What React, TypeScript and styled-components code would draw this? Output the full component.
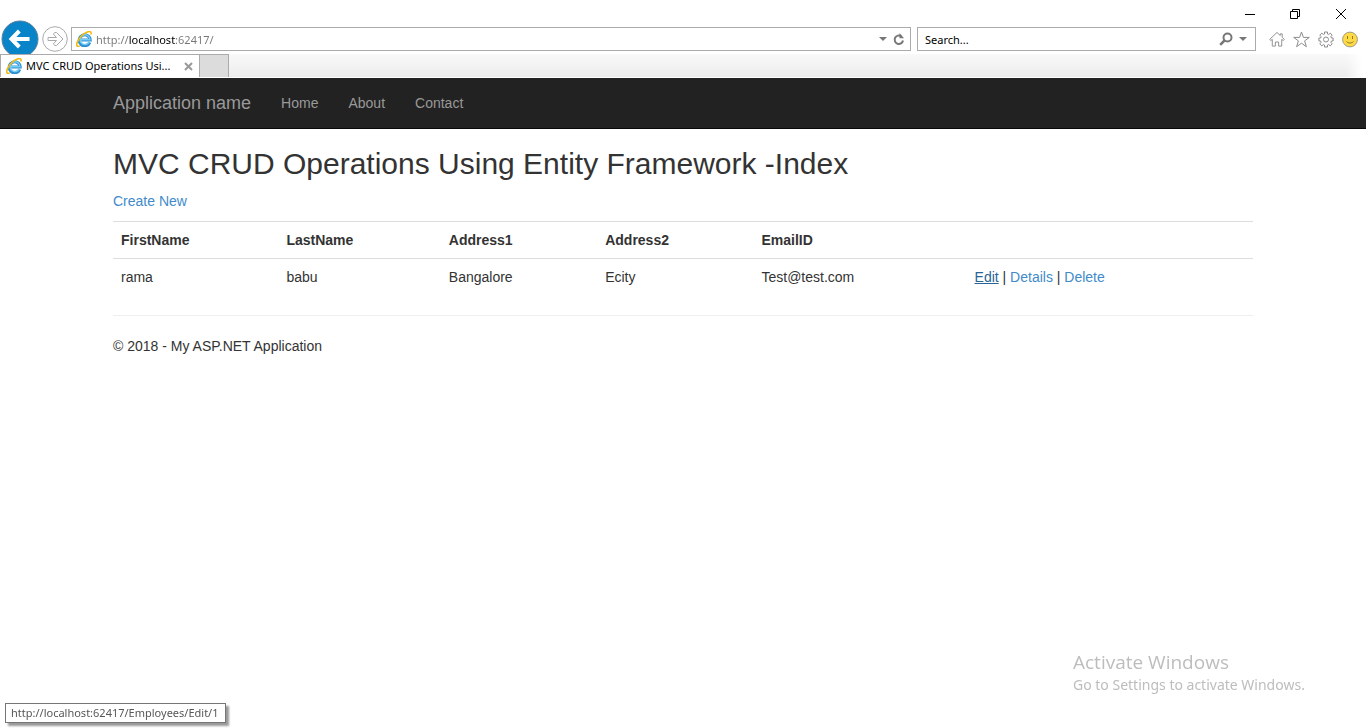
import React from "react";
import styled, { createGlobalStyle } from "styled-components";

const GlobalStyle = createGlobalStyle`
  *, *::before, *::after { box-sizing: border-box; }
  body {
    margin: 0;
    background: #fff;
    color: #333;
    font: 14px/20px "Liberation Sans", Arial, sans-serif;
  }
  button, input { font: inherit; margin: 0; padding: 0; border: 0; background: none; color: inherit; }
  svg { display: block; }
`;

const uiFont = `"Noto Sans", "Open Sans", sans-serif`;

/* ---------- browser frame ---------- */

const Chrome = styled.header`
  background: #fff;
  color: #000;
  font-family: ${uiFont};
  font-size: 11px;
  line-height: 16px;
`;

const TitleBar = styled.div`
  display: flex;
  justify-content: flex-end;
  gap: 34px;
  height: 20px;
  padding: 8px 19px 0 0;
`;

const IconButton = styled.button`
  display: flex;
  flex: none;
  color: #777;
`;

const WindowButton = styled(IconButton)`
  color: #000;
  height: 12px;
`;

const AddressRow = styled.div`
  display: flex;
  align-items: center;
  height: 34px;
  padding: 4px 8px 0 1px;
`;

const BackButton = styled(IconButton)`
  align-self: flex-end;
`;

const ForwardButton = styled(IconButton)`
  margin: 0 3px;
`;

const Field = styled.div`
  display: flex;
  align-items: center;
  height: 24px;
  min-width: 0;
  border: 1px solid #ababab;
  background: #fff;
`;

const AddressField = styled(Field)`
  flex: 1;
  gap: 4px;
  padding: 0 5px 0 4px;
`;

const SearchField = styled(Field)`
  flex: 0 1 339px;
  gap: 4px;
  margin: 0 13px 0 6px;
  padding: 0 8px 0 7px;
`;

const TextInput = styled.input`
  flex: 1;
  min-width: 0;
  height: 20px;
  outline: 0;
  &::placeholder { color: #000; opacity: 1; }
`;

/* The host part of the address is darker than the rest. */
const AddressInput = styled(TextInput)`
  background: linear-gradient(90deg, #777 33px, #000 33px, #000 79px, #777 79px);
  background-clip: text;
  -webkit-background-clip: text;
  -webkit-text-fill-color: transparent;
`;

const FieldTools = styled.div`
  display: flex;
  align-items: center;
  gap: 6px;
`;

const ToolButtons = styled.div`
  display: flex;
  gap: 8px;
`;

const TabBar = styled.div`
  display: flex;
  height: 24px;
  border-bottom: 1px solid #fff;
  background: linear-gradient(90deg, transparent calc(100% - 20px), #fff calc(100% - 4px)),
    linear-gradient(#f9f9f9, #ececec);
`;

const Tab = styled.div`
  display: flex;
  align-items: center;
  gap: 4px;
  width: 200px;
  padding: 0 6px 0 5px;
  border: 1px solid #ababab;
  border-bottom: 0;
  background: #fff;
`;

const TabTitle = styled.span`
  flex: 1;
  white-space: nowrap;
`;

const NewTab = styled.button`
  width: 29px;
  border: 1px solid #ababab;
  border-width: 1px 1px 0 0;
  background: #dcdcdc;
`;

/* ---------- page ---------- */

const NavBar = styled.nav`
  min-height: 51px;
  border-bottom: 1px solid #080808;
  background: #222;
`;

const Container = styled.div`
  max-width: 1170px;
  margin: 0 auto;
  padding: 0 15px;
`;

const NavItems = styled(Container)`
  display: flex;
`;

const NavLink = styled.a`
  padding: 15px;
  color: #999;
  text-decoration: none;
`;

const Brand = styled(NavLink)`
  padding-left: 0;
  font-size: 18px;
`;

const Content = styled(Container).attrs({ as: "main" })`
  padding-top: 18px;
`;

const Heading = styled.h2`
  margin: 0 0 11px;
  font-size: 30px;
  font-weight: 500;
  line-height: 33px;
`;

const Paragraph = styled.p`
  margin: 0 0 10px;
`;

const Link = styled.a<{ $active?: boolean }>`
  color: ${(p) => (p.$active ? "#2a6496" : "#428bca")};
  text-decoration: ${(p) => (p.$active ? "underline" : "none")};
`;

const Table = styled.table`
  width: 100%;
  margin-bottom: 20px;
  border-collapse: collapse;
  border-spacing: 0;
  th, td {
    padding: 8px;
    border-top: 1px solid #ddd;
    text-align: left;
    vertical-align: top;
  }
`;

const Rule = styled.hr`
  margin: 20px 0;
  border: 0;
  border-top: 1px solid #eee;
`;

/* ---------- overlays ---------- */

const StatusTip = styled.div`
  position: fixed;
  left: 5px;
  bottom: 5px;
  padding: 0 6px 0 5px;
  border: 1px solid #767676;
  background: #fff;
  box-shadow: 3px 3px 2px #999;
  color: #575757;
  font: 11px/18px ${uiFont};
`;

const Watermark = styled.aside`
  position: fixed;
  right: 57px;
  bottom: 33px;
  width: 236px;
  color: #bdbdbd;
  font: 14px/20px ${uiFont};
  white-space: nowrap;
`;

const WatermarkTitle = styled.div`
  font-family: "Open Sans", sans-serif;
  font-size: 19px;
  line-height: 26px;
`;

/* ---------- icons ---------- */

const IELogo = () => (
  <svg width="16" height="16" viewBox="0 0 16 16" fill="none" aria-hidden="true">
    <path d="M13.800 11.400A5.500 5.500 0 1 1 14.200 9H5.200" stroke="#2f8fd0" strokeWidth="3" />
    <path d="M13.200 11.200A4.900 4.900 0 1 1 13.900 8.800H5" stroke="#74cdf8" strokeWidth="1.500" />
    <path d="M3.600 15C1 16 0 14.400 1.200 11.400 3 7 7.500 2.500 11.400 1 14.400-.1 15.700 1 14.800 3.600" stroke="#f2b90c" strokeWidth="1.600" />
  </svg>
);

const Caret = () => (
  <svg width="8" height="4" viewBox="0 0 8 4" aria-hidden="true">
    <path d="M0 0h8L4 4z" fill="#777" />
  </svg>
);

const BackIcon = () => (
  <svg width="38" height="34" viewBox="0 0 38 34" aria-hidden="true">
    <circle cx="19" cy="19" r="18" fill="#0a84c8" stroke="#557f99" />
    <path d="M28.500 19H11M18.300 11 10.500 19l7.800 8" fill="none" stroke="#fff" strokeWidth="4" />
  </svg>
);

const ForwardIcon = () => (
  <svg width="26" height="26" viewBox="0 0 26 26" fill="none" stroke="#aaa" aria-hidden="true">
    <circle cx="13" cy="13" r="12.300" />
    <path d="M6 11.500h8.500L11.300 8l1.700-1.500h1.500L21 13l-6.500 6.500H13L11.300 18l3.200-3.500H6z" />
  </svg>
);

const RefreshIcon = () => (
  <svg width="12" height="13" viewBox="0 0 12 13" fill="none" aria-hidden="true">
    <path d="M8.300 3.300A4.200 4.200 0 1 0 10 7.500" stroke="#777" strokeWidth="2" />
    <path d="M6.500 0v5.300H11z" fill="#777" />
  </svg>
);

const SearchIcon = () => (
  <svg width="14" height="14" viewBox="0 0 14 14" fill="none" stroke="#777" aria-hidden="true">
    <circle cx="8.500" cy="5.500" r="4" strokeWidth="2" />
    <path d="M5.500 8.500 1.200 12.800" strokeWidth="2.500" />
  </svg>
);

const HomeIcon = () => (
  <svg width="16" height="17" viewBox="0 0 17 17" fill="none" stroke="#8c8c8c" aria-hidden="true">
    <path d="M8.500 1 .8 8.300l1 1.300 1.700-1.200v7.100h3.300v-4.300h3.400v4.300h3.300V8.400l1.700 1.200 1-1.300-2.200-2.200V2.500h-2v1.700z" />
  </svg>
);

const StarIcon = () => (
  <svg width="17" height="17" viewBox="0 0 17 17" fill="none" stroke="#8c8c8c" aria-hidden="true">
    <path d="m8.500 1 1.900 5.400h5.900l-4.700 3.500 1.800 5.800-4.900-3.500-4.900 3.500 1.800-5.800L.7 6.400h5.900z" />
  </svg>
);

const GearIcon = () => (
  <svg width="16" height="17" viewBox="0 0 16 17" fill="none" stroke="#8c8c8c" aria-hidden="true">
    <circle cx="8" cy="8.500" r="2.500" />
    <path d="M6.500 1h3v2l1.200.5 1.500-1.400 2 2-1.300 1.600.5 1.300h1.700v3h-1.700l-.5 1.300 1.300 1.600-2 2-1.500-1.400-1.200.5v2h-3v-2l-1.200-.5-1.500 1.400-2-2 1.300-1.600L2.600 10H.9V7h1.700l.5-1.300-1.300-1.600 2-2 1.500 1.400L6.500 3z" />
  </svg>
);

const SmileIcon = () => (
  <svg width="16" height="17" viewBox="0 0 16 17" aria-hidden="true">
    <circle cx="8" cy="8.500" r="7.400" fill="#ffda44" stroke="#a09a88" />
    <path d="M5.500 5v3M10.500 5v3M4.500 10.500c1.500 2 5.500 2 7 0" fill="none" stroke="#8f7a35" />
  </svg>
);

const MinimizeIcon = () => (
  <svg width="12" height="12" viewBox="0 0 12 12" fill="none" stroke="#000" aria-hidden="true">
    <path d="M2 6.500h10" />
  </svg>
);

const RestoreIcon = () => (
  <svg width="12" height="12" viewBox="0 0 12 12" fill="none" stroke="#000" aria-hidden="true">
    <path d="M1.500 3.500h7v7h-7zM3.500 3.500v-2h7v7h-2" />
  </svg>
);

const CloseIcon = () => (
  <svg width="12" height="12" viewBox="0 0 12 12" fill="none" stroke="#000" aria-hidden="true">
    <path d="m1 1 10 10M11 1 1 11" />
  </svg>
);

const TabCloseIcon = () => (
  <svg width="9" height="9" viewBox="0 0 9 9" fill="none" stroke="#999" aria-hidden="true">
    <path d="m1 1 7 7M8 1 1 8" strokeWidth="2" />
  </svg>
);

/* ---------- data ---------- */

const columns = ["FirstName", "LastName", "Address1", "Address2", "EmailID"];

const employees = [
  { id: 1, values: ["rama", "babu", "Bangalore", "Ecity", "Test@test.com"] },
];

export default function App() {
  return (
    <>
      <GlobalStyle />
      <Chrome>
        <TitleBar>
          <WindowButton aria-label="Minimize"><MinimizeIcon /></WindowButton>
          <WindowButton aria-label="Restore"><RestoreIcon /></WindowButton>
          <WindowButton aria-label="Close"><CloseIcon /></WindowButton>
        </TitleBar>
        <AddressRow>
          <BackButton aria-label="Back"><BackIcon /></BackButton>
          <ForwardButton aria-label="Forward"><ForwardIcon /></ForwardButton>
          <AddressField>
            <IELogo />
            <AddressInput aria-label="Address" defaultValue="http://localhost:62417/" />
            <FieldTools>
              <IconButton aria-label="Show addresses"><Caret /></IconButton>
              <IconButton aria-label="Refresh"><RefreshIcon /></IconButton>
            </FieldTools>
          </AddressField>
          <SearchField>
            <TextInput aria-label="Search" placeholder="Search..." />
            <FieldTools>
              <IconButton aria-label="Run search"><SearchIcon /></IconButton>
              <IconButton aria-label="Search options"><Caret /></IconButton>
            </FieldTools>
          </SearchField>
          <ToolButtons>
            <IconButton aria-label="Home page"><HomeIcon /></IconButton>
            <IconButton aria-label="Favorites"><StarIcon /></IconButton>
            <IconButton aria-label="Tools"><GearIcon /></IconButton>
            <IconButton aria-label="Feedback"><SmileIcon /></IconButton>
          </ToolButtons>
        </AddressRow>
        <TabBar>
          <Tab>
            <IELogo />
            <TabTitle>MVC CRUD Operations Usi...</TabTitle>
            <IconButton aria-label="Close tab"><TabCloseIcon /></IconButton>
          </Tab>
          <NewTab aria-label="New tab" />
        </TabBar>
      </Chrome>

      <NavBar>
        <NavItems>
          <Brand href="#">Application name</Brand>
          <NavLink href="#">Home</NavLink>
          <NavLink href="#">About</NavLink>
          <NavLink href="#">Contact</NavLink>
        </NavItems>
      </NavBar>

      <Content>
        <Heading>MVC CRUD Operations Using Entity Framework -Index</Heading>
        <Paragraph><Link href="#">Create New</Link></Paragraph>
        <Table>
          <thead>
            <tr>
              {columns.map((c) => <th key={c} scope="col">{c}</th>)}
              <td />
            </tr>
          </thead>
          <tbody>
            {employees.map((e) => (
              <tr key={e.id}>
                {e.values.map((v) => <td key={v}>{v}</td>)}
                <td>
                  <Link href="#" $active>Edit</Link> | <Link href="#">Details</Link> | <Link href="#">Delete</Link>
                </td>
              </tr>
            ))}
          </tbody>
        </Table>
        <Rule />
        <footer>
          <Paragraph>© 2018 - My ASP.NET Application</Paragraph>
        </footer>
      </Content>

      <Watermark>
        <WatermarkTitle>Activate Windows</WatermarkTitle>
        Go to Settings to activate Windows.
      </Watermark>
      <StatusTip role="status">http://localhost:62417/Employees/Edit/1</StatusTip>
    </>
  );
}
